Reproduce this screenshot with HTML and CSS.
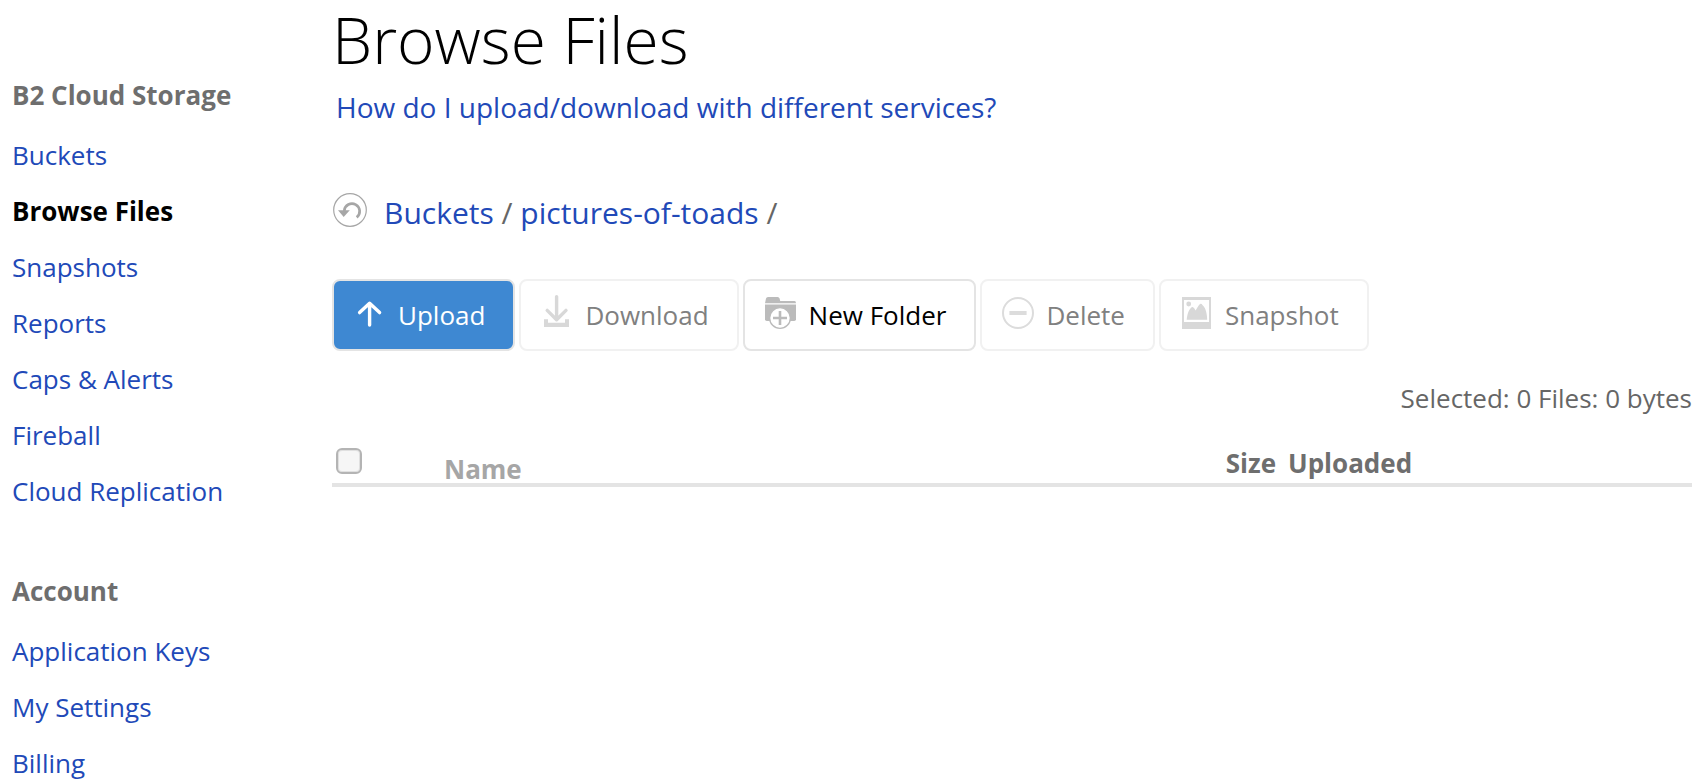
FILE: index.html
```html
<!DOCTYPE html>
<html lang="en">
<head>
<meta charset="utf-8">
<title>Browse Files</title>
<link rel="stylesheet" href="styles.css">
</head>
<body>
<div class="page">
  <nav class="sidebar" aria-label="Main">
    <section class="nav-group">
      <h2 class="nav-title">B2 Cloud Storage</h2>
      <ul class="nav-list">
        <li><a href="#buckets">Buckets</a></li>
        <li><a href="#browse" class="current" aria-current="page">Browse Files</a></li>
        <li><a href="#snapshots">Snapshots</a></li>
        <li><a href="#reports">Reports</a></li>
        <li><a href="#caps">Caps &amp; Alerts</a></li>
        <li><a href="#fireball">Fireball</a></li>
        <li><a href="#replication">Cloud Replication</a></li>
      </ul>
    </section>
    <section class="nav-group">
      <h2 class="nav-title">Account</h2>
      <ul class="nav-list">
        <li><a href="#keys">Application Keys</a></li>
        <li><a href="#settings">My Settings</a></li>
        <li><a href="#billing">Billing</a></li>
      </ul>
    </section>
  </nav>

  <main class="content">
    <h1 class="title">Browse Files</h1>
    <p class="help"><a href="#help">How do I upload/download with different services?</a></p>

    <div class="location">
      <button type="button" class="refresh" aria-label="Refresh">
        <svg viewBox="0 0 34 34" width="34" height="34" fill="none" stroke="#a6a6a6">
          <circle cx="17" cy="17" r="16.3" stroke-width="1.2"/>
          <path d="M11.3 18.4V17.6a7.7 7.7 0 1 1 12.4 6.8" stroke-width="2.7"/>
          <path d="M5 17.2H16.8L10.7 24z" fill="#a6a6a6" stroke="none"/>
        </svg>
      </button>
      <div class="crumbs"><a href="#buckets">Buckets</a> / <a href="#toads">pictures-of-toads</a> /</div>
    </div>

    <div class="toolbar">
      <button type="button" class="tool primary">
        <svg viewBox="0 0 32 32" width="32" height="32" fill="none" stroke="#fff" stroke-width="3.4" stroke-linecap="round" stroke-linejoin="round">
          <path d="M15.6 28V6.5M5.6 15.6l10-9.4 10 9.4"/>
        </svg>
        <span>Upload</span>
      </button>
      <button type="button" class="tool" disabled>
        <svg viewBox="0 0 32 32" width="32" height="32" fill="none" stroke="#d8d8d8">
          <path d="M15.6 -.4V22.5M6.2 13.4l9.4 9.4 9.4-9.4" stroke-width="3.4" stroke-linecap="round" stroke-linejoin="round"/>
          <path d="M3 22.3h4v3.4h17v-3.4h4V30H3z" fill="#d8d8d8" stroke="none"/>
        </svg>
        <span>Download</span>
      </button>
      <button type="button" class="tool">
        <svg viewBox="0 0 32 32" width="32" height="32">
          <path d="M0 6.2 1 1.6Q1.4 0 3 0H12.6Q14.2 0 14.6 1.6L15.2 4H29.5Q31 4 31 6.2z" fill="#bbb"/>
          <path d="M0 7.6H31V22.2Q31 24 29.2 24H1.8Q0 24 0 22.2z" fill="#bbb"/>
          <circle cx="15" cy="21" r="10.4" fill="#fff" stroke="#bbb" stroke-width="1.4"/>
          <path d="M15 14v14M8 21h14" stroke="#bbb" stroke-width="2.6"/>
        </svg>
        <span>New Folder</span>
      </button>
      <button type="button" class="tool" disabled>
        <svg viewBox="0 0 32 32" width="32" height="32" fill="none" stroke="#dcdcdc">
          <circle cx="16" cy="16" r="15" stroke-width="2"/>
          <path d="M7.4 16h17.2" stroke-width="4"/>
        </svg>
        <span>Delete</span>
      </button>
      <button type="button" class="tool" disabled>
        <svg viewBox="0 0 32 32" width="32" height="32" fill="#d8d8d8">
          <path fill-rule="evenodd" d="M1 0H30V32H1zM3 3V25H28V3z"/>
          <circle cx="7.7" cy="7" r="2.4"/>
          <path d="M5.7 22.8C6.2 17 8 12.4 10.6 10.3Q12 9.3 13.4 11.6L14.6 13.4C16 11.6 17.4 8.3 19 7Q20.4 6.2 21.6 8.2C23.6 9.4 26.2 15 26.2 22.8z"/>
        </svg>
        <span>Snapshot</span>
      </button>
    </div>

    <p class="selection">Selected: 0 Files: 0 bytes</p>

    <table class="files">
      <thead>
        <tr>
          <th class="col-check"><input type="checkbox" class="check" aria-label="Select all files"></th>
          <th class="col-name">Name</th>
          <th class="col-size">Size</th>
          <th class="col-uploaded">Uploaded</th>
        </tr>
      </thead>
    </table>
  </main>
</div>
</body>
</html>
```
FILE: styles.css
```css
* {
  box-sizing: border-box;
}

body {
  margin: 0;
  background: #fff;
  color: #666;
  font: 26px/36px "Open Sans", "Noto Sans", sans-serif;
}

h1, h2, p, ul {
  margin: 0;
  padding: 0;
}

a {
  color: #2149b8;
  text-decoration: none;
}

button {
  font: inherit;
}

svg {
  display: block;
  overflow: visible;
}

.page {
  display: flex;
}

.sidebar {
  display: flex;
  flex: none;
  flex-direction: column;
  gap: 54px;
  width: 332px;
  padding: 77px 12px 0;
}

.nav-title {
  margin-bottom: 14px;
  color: #6e6e6e;
  font-size: 26px;
  font-weight: 700;
}

.nav-list {
  list-style: none;
  line-height: 56px;
}

.nav-list li {
  height: 56px;
}

.nav-list .current {
  color: #000;
  font-weight: 700;
}

.content {
  flex: 1;
  min-width: 0;
  padding-right: 14px;
}

.title {
  color: #000;
  font-size: 64px;
  font-weight: 300;
  line-height: 80px;
}

.help {
  padding: 7px 4px 0;
  font-size: 28px;
  line-height: 40px;
}

.location {
  display: flex;
  align-items: flex-start;
  gap: 17px;
  margin-top: 66px;
  font-size: 30px;
  line-height: 40px;
}

.refresh {
  margin: 0 0 0 1px;
  padding: 0;
  border: 0;
  background: none;
}

.toolbar {
  display: flex;
  gap: 4px;
  margin-top: 46px;
}

.tool {
  display: flex;
  align-items: center;
  gap: 12px;
  height: 72px;
  padding: 0 28px 0 20px;
  border: 2px solid #e4e4e4;
  border-radius: 8px;
  background: #fff;
  color: #000;
  white-space: nowrap;
}

.tool svg {
  margin-bottom: 4px;
}

.tool:disabled {
  border-color: #f1f1f1;
  color: #808080;
}

.tool.primary {
  background: #3e88d2;
  color: #fff;
}

.selection {
  margin-top: 29px;
  text-align: right;
}

.files {
  width: 100%;
  margin-top: 29px;
  border-collapse: separate;
  border-spacing: 0;
  table-layout: fixed;
  color: #6e6e6e;
}

.files th {
  height: 42px;
  padding: 0;
  border-bottom: 4px solid #e4e4e4;
  text-align: left;
  vertical-align: top;
}

.files .col-check {
  width: 112px;
  padding: 3px 0 0 4px;
}

.files .col-name {
  color: #a6a6a6;
  line-height: 28px;
  vertical-align: bottom;
}

.files .col-size {
  width: 80px;
  padding-right: 12px;
  text-align: right;
}

.files .col-uploaded {
  width: 404px;
}

.check {
  display: block;
  width: 26px;
  height: 26px;
  margin: 0;
  border: 2px solid #b4b4b4;
  border-radius: 6px;
  background: #f6f6f6;
  box-shadow: inset 0 0 0 1px #e0e0e0;
  appearance: none;
}
```
